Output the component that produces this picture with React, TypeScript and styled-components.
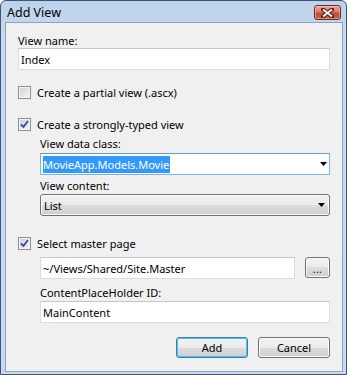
import React from "react";
import styled, { createGlobalStyle } from "styled-components";

const GlobalStyle = createGlobalStyle`
  html, body { margin: 0; padding: 0; background: #ffffff; }
  body {
    font-family: "Noto Sans", "Open Sans", sans-serif;
    font-size: 11px;
    color: #000000;
  }
  * { box-sizing: border-box; }
`;

const Window = styled.div`
  width: 347px;
  height: 375px;
  display: flex;
  flex-direction: column;
  background: linear-gradient(#bcd2eb, #c8dbf0 40px, #c6d9ee);
  border: 1px solid #415673;
  border-radius: 6px 6px 0 0;
  padding: 0 3px 2px 4px;
`;

const TitleBar = styled.div`
  height: 21px;
  display: flex;
  align-items: center;
  justify-content: space-between;
  padding-left: 2px;
`;

const Title = styled.span`
  font-size: 12.5px;
  line-height: 15px;
  margin-top: 1px;
`;

const CloseButton = styled.div`
  width: 27px;
  height: 15px;
  margin-top: 2px;
  margin-right: 2px;
  border: 1px solid #6e2a22;
  border-radius: 3px;
  background: linear-gradient(#e6a79b, #d27a69 45%, #c24a35 55%, #c9604a);
  box-shadow: inset 0 0 0 1px rgba(255, 220, 210, 0.45);
  display: flex;
  align-items: center;
  justify-content: center;
`;

const Panel = styled.div`
  flex: 1;
  border: 1px solid #8ea2bb;
  background: #f0f0f0;
  padding: 10px 12px 0 12px;
  display: flex;
  flex-direction: column;
`;

const Label = styled.div<{ $top?: number }>`
  line-height: 15px;
  height: 15px;
  margin-top: ${({ $top }) => $top ?? 0}px;
  white-space: nowrap;
`;

const TextBox = styled.div<{ $top?: number; $focus?: boolean; $grow?: boolean }>`
  height: 22px;
  margin-top: ${({ $top }) => $top ?? 0}px;
  background: #ffffff;
  border: 1px solid ${({ $focus }) => ($focus ? "#7eb4ea" : "#dadde3")};
  border-top-color: ${({ $focus }) => ($focus ? "#569de5" : "#c3c6cc")};
  display: flex;
  align-items: center;
  padding: 0 2px;
  flex: ${({ $grow }) => ($grow ? 1 : "none")};
  min-width: 0;
  white-space: nowrap;
`;

const Selected = styled.span`
  background: #3399ff;
  color: #ffffff;
  line-height: 17px;
  padding-right: 1px;
`;

const Spacer = styled.span`
  flex: 1;
`;

const Arrow = () => (
  <svg width="7" height="4" viewBox="0 0 7 4">
    <polygon points="0,0 7,0 3.5,4" fill="#000000" />
  </svg>
);

const DropDown = styled.div<{ $top?: number }>`
  height: 22px;
  margin-top: ${({ $top }) => $top ?? 0}px;
  border: 1px solid #707070;
  border-radius: 3px;
  background: linear-gradient(#f2f2f2, #ebebeb 50%, #dddddd 50%, #cfcfcf);
  box-shadow: inset 0 0 0 1px #fbfbfb;
  display: flex;
  align-items: center;
  padding: 0 4px 0 3px;
`;

const CheckRow = styled.div<{ $top?: number }>`
  display: flex;
  align-items: center;
  gap: 6px;
  height: 15px;
  margin-top: ${({ $top }) => $top ?? 0}px;
`;

const Box = styled.div`
  width: 13px;
  height: 13px;
  border: 1px solid #8e8f8f;
  background: linear-gradient(135deg, #cbcfd5, #f6f6f6);
  box-shadow: inset 0 0 0 1px #f4f4f4;
  display: flex;
  align-items: center;
  justify-content: center;
`;

const Indent = styled.div`
  display: flex;
  flex-direction: column;
  padding-left: 22px;
`;

const BrowseRow = styled.div<{ $top?: number }>`
  display: flex;
  gap: 10px;
  margin-top: ${({ $top }) => $top ?? 0}px;
  height: 22px;
`;

const Button = styled.div<{ $width: number; $default?: boolean }>`
  width: ${({ $width }) => $width}px;
  height: 21px;
  border: 1px solid ${({ $default }) => ($default ? "#3c7fb1" : "#707070")};
  border-radius: 3px;
  background: linear-gradient(#f2f2f2, #ebebeb 50%, #dddddd 50%, #cfcfcf);
  box-shadow: inset 0 0 0 1px ${({ $default }) => ($default ? "#48c3f0" : "#fbfbfb")};
  display: flex;
  align-items: center;
  justify-content: center;
  line-height: 15px;
`;

const Ellipsis = styled.span`
  font-size: 10px;
  line-height: 10px;
  margin-top: 3px;
  letter-spacing: 0.5px;
`;

const ButtonRow = styled.div`
  display: flex;
  justify-content: flex-end;
  gap: 10px;
  margin-top: 14px;
`;

const Check = ({ checked }: { checked?: boolean }) => (
  <Box>
    {checked && (
      <svg width="9" height="9" viewBox="0 0 9 9">
        <path d="M1 4.5 L3.5 7 L8 1" fill="none" stroke="#34489e" strokeWidth="1.8" />
      </svg>
    )}
  </Box>
);

export default function App() {
  return (
    <>
      <GlobalStyle />
      <Window>
        <TitleBar>
          <Title>Add View</Title>
          <CloseButton>
            <svg width="13" height="10" viewBox="0 0 13 10">
              <path d="M2 1.5 L11 8.5 M11 1.5 L2 8.5" stroke="#5a1c15" strokeWidth="4" strokeLinecap="square" />
              <path d="M2 1.5 L11 8.5 M11 1.5 L2 8.5" stroke="#f4f4f4" strokeWidth="2" />
            </svg>
          </CloseButton>
        </TitleBar>
        <Panel>
          <Label>View name:</Label>
          <TextBox>Index</TextBox>

          <CheckRow $top={15}>
            <Check />
            <span>Create a partial view (.ascx)</span>
          </CheckRow>

          <CheckRow $top={17}>
            <Check checked />
            <span>Create a strongly-typed view</span>
          </CheckRow>

          <Indent>
            <Label $top={4}>View data class:</Label>
            <TextBox $top={2} $focus>
              <Selected>MovieApp.Models.Movie</Selected>
              <Spacer />
              <Arrow />
            </TextBox>
            <Label $top={3}>View content:</Label>
            <DropDown $top={1}>
              <span>List</span>
              <Spacer />
              <Arrow />
            </DropDown>
          </Indent>

          <CheckRow $top={20}>
            <Check checked />
            <span>Select master page</span>
          </CheckRow>

          <Indent>
            <BrowseRow $top={6}>
              <TextBox $grow>~/Views/Shared/Site.Master</TextBox>
              <Button $width={25}>
                <Ellipsis>...</Ellipsis>
              </Button>
            </BrowseRow>
            <Label $top={6}>ContentPlaceHolder ID:</Label>
            <TextBox $top={1}>MainContent</TextBox>
          </Indent>

          <ButtonRow>
            <Button $width={72} $default>Add</Button>
            <Button $width={72}>Cancel</Button>
          </ButtonRow>
        </Panel>
      </Window>
    </>
  );
}
